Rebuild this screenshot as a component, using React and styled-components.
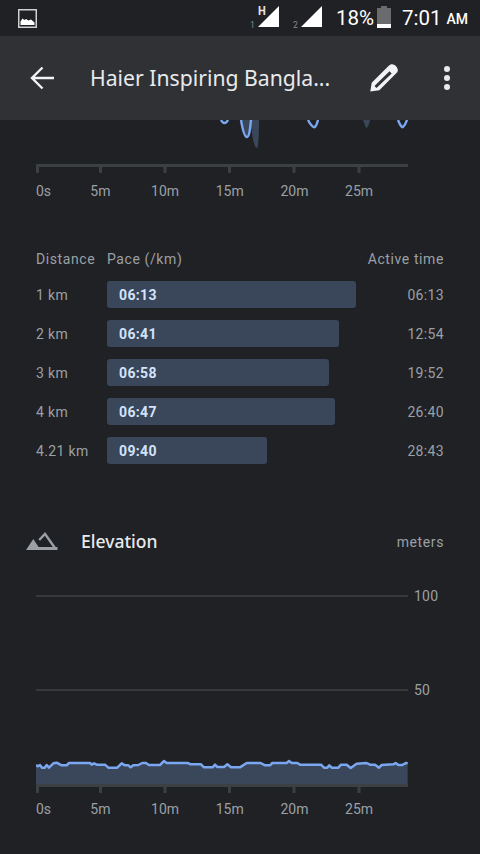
import React from 'react';
import styled, { createGlobalStyle } from 'styled-components';

const GlobalStyle = createGlobalStyle`
  html, body {
    margin: 0;
    padding: 0;
    background: #202124;
  }
`;

const Screen = styled.div`
  width: 480px;
  height: 854px;
  overflow: hidden;
  background: #202124;
  font-family: Roboto, "Liberation Sans", sans-serif;
  color: #9aa0a6;
`;

const StatusBar = styled.div`
  height: 36px;
  display: flex;
  align-items: center;
  padding: 0 12px 0 18px;
  color: #fff;
`;

const StatusRight = styled.div`
  margin-left: auto;
  display: flex;
  align-items: center;
  height: 36px;
`;

const StatusText = styled.span`
  font-size: 20.5px;
  line-height: 36px;
  margin-left: ${p => p.$gap || 0}px;
`;

const AmPm = styled.span`
  font-size: 14px;
  font-weight: 500;
  line-height: 36px;
  margin: 2px 0 0 5px;
`;

const Signal = styled.div`
  position: relative;
  width: 21px;
  height: 21px;
  align-self: flex-start;
  margin: 6px 0 0 ${p => p.$gap}px;
`;

const SimNumber = styled.span`
  position: absolute;
  left: -8px;
  top: 14px;
  font-size: 8.5px;
  line-height: 10px;
  color: #85888c;
`;

const NetworkType = styled.span`
  position: absolute;
  left: 0;
  top: -2px;
  font-size: 13px;
  line-height: 14px;
  font-weight: 700;
  color: #e4e4e4;
  transform: scaleX(0.85);
  transform-origin: left center;
`;

const Battery = styled.svg`
  align-self: flex-start;
  margin: 6px 0 0 3px;
`;

const AppBar = styled.header`
  height: 84px;
  display: flex;
  align-items: center;
  background: #303134;
  color: #e8eaed;
`;

const IconSlot = styled.div`
  display: flex;
  flex: none;
  margin-left: ${p => p.$left}px;
`;

const Title = styled.h1`
  margin: 0 0 0 36px;
  width: 256px;
  flex: none;
  font-family: "Noto Sans", Roboto, sans-serif;
  font-size: 21.2px;
  line-height: 28px;
  font-weight: 400;
  white-space: nowrap;
`;

const Dots = styled.div`
  display: flex;
  flex-direction: column;
  gap: 3px;
  margin-left: 46px;
  span {
    width: 6px;
    height: 6px;
    border-radius: 50%;
    background: #e8eaed;
  }
`;

const ChartClip = styled.svg`
  display: block;
  width: 372px;
  height: 30px;
  margin-left: 36px;
`;

const TopAxis = styled.div`
  margin-top: 14px;
`;

const AxisTicks = styled.svg`
  display: block;
  width: 372px;
  height: 11px;
  margin-left: 36px;
`;

const AxisLabels = styled.div`
  display: flex;
  margin: ${p => p.$gap}px 0 0 36px;
  font-size: 14px;
  line-height: 18px;
  color: #9aa0a6;
`;

const AxisLabel = styled.span`
  flex: none;
  width: ${p => (p.$first ? 32 : 64.7)}px;
  text-align: ${p => (p.$first ? 'left' : 'center')};
`;

const SplitTable = styled.section`
  margin-top: 50px;
  padding: 0 36px;
  font-size: 14px;
  letter-spacing: 0.35px;
`;

const SplitRow = styled.div`
  display: flex;
  align-items: center;
  height: 27px;
  margin-bottom: 12px;
`;

const HeadRow = styled(SplitRow)`
  height: 18px;
  margin-bottom: 13px;
  letter-spacing: 0.6px;
`;

const DistanceCell = styled.span`
  width: 71px;
  flex: none;
`;

const PaceCell = styled.div`
  flex: 1;
`;

const PaceBar = styled.div`
  height: 27px;
  box-sizing: border-box;
  padding-left: 12px;
  border-radius: 3px;
  background: #3a4659;
  color: #d2e3fc;
  font-weight: 700;
  line-height: 29px;
`;

const TimeCell = styled.span`
  flex: none;
  text-align: right;
`;

const ElevationHead = styled.div`
  display: flex;
  align-items: center;
  height: 24px;
  margin-top: 65px;
  padding: 0 36px 0 26px;
`;

const ElevationTitle = styled.h2`
  margin: 0 0 0 23px;
  font-family: "Noto Sans", Roboto, sans-serif;
  font-size: 17.5px;
  font-weight: 500;
  color: #e8eaed;
`;

const Unit = styled.span`
  margin: 2px 0 0 auto;
  font-size: 14px;
  letter-spacing: 0.6px;
`;

const GridRow = styled.div`
  display: flex;
  align-items: center;
  height: 18px;
  margin: ${p => p.$top}px 0 0 36px;
  font-size: 14px;
  letter-spacing: 0.2px;
`;

const GridLine = styled.div`
  width: 372px;
  height: 2px;
  background: #38393d;
`;

const GridValue = styled.span`
  margin-left: 6px;
`;

const PlotArea = styled.svg`
  display: block;
  width: 372px;
  height: 27px;
  margin: 58px 0 0 36px;
`;

const ELEVATION_LINE =
  '108,74 113,78 120,74 126,82 134,82 140,74 147,82 160,69 170,67 185,75 200,75 207,68 270,68 275,73 282,69 290,73 315,73 325,82 352,82 365,69 375,75 385,75 392,81 400,75 415,74 427,68 438,68 447,74 480,74 492,62 500,68 563,68 572,72 603,72 612,81 638,81 645,73 652,80 672,80 682,72 693,81 720,81 740,68 782,68 795,75 810,75 817,68 860,68 867,62 875,68 892,68 900,73 963,73 972,82 982,82 988,75 995,82 1015,82 1023,73 1040,73 1052,83 1070,70 1100,68 1110,73 1125,73 1137,82 1145,74 1180,72 1187,68 1195,74 1207,74 1217,68 1223,69';

const AXIS_LABELS = ['0s', '5m', '10m', '15m', '20m', '25m'];
const TICKS = [1.5, 64.5, 129, 193.5, 258, 323];

const SPLITS = [
  { distance: '1 km', pace: '06:13', width: 249, time: '06:13' },
  { distance: '2 km', pace: '06:41', width: 232, time: '12:54' },
  { distance: '3 km', pace: '06:58', width: 222, time: '19:52' },
  { distance: '4 km', pace: '06:47', width: 228, time: '26:40' },
  { distance: '4.21 km', pace: '09:40', width: 160, time: '28:43' },
];

const SignalIcon = () => (
  <svg width="21" height="21" viewBox="0 0 21 21">
    <path d="M0 21 21 0v21z" fill="#fff" />
  </svg>
);

const Axis = ({ labelGap }) => (
  <div>
    <AxisTicks viewBox="0 0 372 11">
      <rect x="0" y="0" width="372" height="3" fill="#3c4043" />
      {TICKS.map(x => (
        <rect key={x} x={x - 1.5} y="0" width="3" height="9" fill="#3c4043" />
      ))}
    </AxisTicks>
    <AxisLabels $gap={labelGap}>
      {AXIS_LABELS.map((label, i) => (
        <AxisLabel key={label} $first={i === 0}>{label}</AxisLabel>
      ))}
    </AxisLabels>
  </div>
);

const App = () => (
  <Screen>
    <GlobalStyle />
    <StatusBar>
      <svg width="19" height="19" viewBox="0 0 19 19">
        <rect x="0.75" y="0.75" width="17.5" height="17.5" fill="none" stroke="#d0d0d0" strokeWidth="1.5" />
        <path d="M2.5 16v-3.5L4.5 9.5 6.5 11 8 10l2.5 1.5L13 10.5l3.5 3V16z" fill="#fff" />
      </svg>
      <StatusRight>
        <Signal $gap={0}>
          <SignalIcon />
          <SimNumber>1</SimNumber>
          <NetworkType>H</NetworkType>
        </Signal>
        <Signal $gap={22}>
          <SignalIcon />
          <SimNumber>2</SimNumber>
        </Signal>
        <StatusText $gap={14}>18%</StatusText>
        <Battery width="14" height="22" viewBox="0 0 14 22">
          <path d="M4 0h6v2h4v20H0V2h4z" fill="#6a6b6d" />
          <rect x="0" y="18" width="14" height="4" fill="#fff" />
        </Battery>
        <StatusText $gap={11}>7:01</StatusText>
        <AmPm>AM</AmPm>
      </StatusRight>
    </StatusBar>
    <AppBar>
      <IconSlot $left={30}>
        <svg width="24" height="24" viewBox="0 0 24 24" fill="none" stroke="#f1f3f4" strokeWidth="2.4">
          <path d="M24 12H2M12.5 1.5 2 12l10.5 10.5" />
        </svg>
      </IconSlot>
      <Title>Haier Inspiring Bangla...</Title>
      <IconSlot $left={24}>
        <svg width="28" height="28" viewBox="0 0 28 28" fill="#f1f3f4" fillRule="evenodd">
          <path d="M0.3 27.6 1.7 18.7 18.5 2C20.5 0 22.5 0 24.5 1 26.5 2 28 4.5 27.8 6.5 27.6 8 27 8.5 26.5 9L9.3 26.3ZM4.5 22 6.5 24 21.7 9.5 19.5 7.3Z" />
        </svg>
      </IconSlot>
      <Dots>
        <span />
        <span />
        <span />
      </Dots>
    </AppBar>

    <ChartClip viewBox="36 120 372 30">
      <path d="M241 120C243 130 245 137 247 137 250 137 251 130 251.5 128 252 135 254 148 257 148 258.5 148 259 135 259 120Z" fill="#3a4659" />
      <path d="M363 120l3 8c2 0 3-4 4-8z" fill="#3a4659" />
      <g fill="none" stroke="#7aa7f0" strokeWidth="2.4">
        <path d="M221 120c2 4 5 4 7 0" />
        <path d="M241 120c2 12 4 17 6 17s3-7 4-17" />
        <path d="M308 120c3 6 6 8 7 7s2-3 3-7" />
        <path d="M398 120c2 5 4 8 5 7s3-4 4-7" />
      </g>
    </ChartClip>

    <TopAxis>
      <Axis labelGap={7} />
    </TopAxis>

    <SplitTable>
      <HeadRow>
        <DistanceCell>Distance</DistanceCell>
        <PaceCell>Pace (/km)</PaceCell>
        <TimeCell>Active time</TimeCell>
      </HeadRow>
      {SPLITS.map(split => (
        <SplitRow key={split.distance}>
          <DistanceCell>{split.distance}</DistanceCell>
          <PaceCell>
            <PaceBar style={{ width: split.width }}>{split.pace}</PaceBar>
          </PaceCell>
          <TimeCell>{split.time}</TimeCell>
        </SplitRow>
      ))}
    </SplitTable>

    <ElevationHead>
      <svg width="32" height="18" viewBox="0 0 32 18">
        <path d="M0 18 7.3 7 14.5 18z" fill="#9aa0a6" />
        <path d="M10 15h21.5v3H10z" fill="#9aa0a6" />
        <path d="M13.2 8 19 1.9 29.3 16.5" fill="none" stroke="#9aa0a6" strokeWidth="2.4" />
      </svg>
      <ElevationTitle>Elevation</ElevationTitle>
      <Unit>meters</Unit>
    </ElevationHead>

    <GridRow $top={34}>
      <GridLine />
      <GridValue>100</GridValue>
    </GridRow>
    <GridRow $top={76}>
      <GridLine />
      <GridValue>50</GridValue>
    </GridRow>

    <PlotArea viewBox="108 50 1116 81">
      <polygon points={`108,131 ${ELEVATION_LINE} 1223,131`} fill="#3a4659" />
      <polyline points={ELEVATION_LINE} fill="none" stroke="#7aa7f0" strokeWidth="7.5" strokeLinejoin="round" />
    </PlotArea>
    <Axis labelGap={5} />
  </Screen>
);

export default App;
